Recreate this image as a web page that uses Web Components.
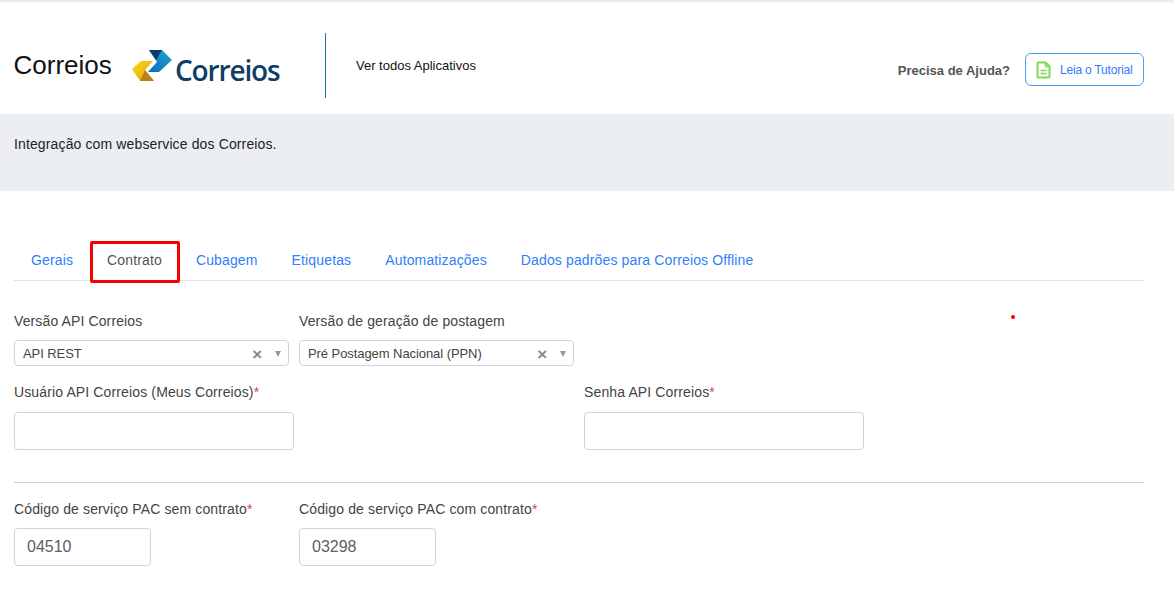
<!DOCTYPE html>
<html lang="pt-BR">
<head>
<meta charset="utf-8">
<title>Correios</title>
<style>
  html, body { margin: 0; background: #fff; font-family: "Liberation Sans", Arial, sans-serif; overflow: hidden; }
</style>
</head>
<body>
<app-header></app-header>
<info-banner>Integração com webservice dos Correios.</info-banner>
<tab-bar>
  <tab-item>Gerais</tab-item>
  <tab-item active>Contrato</tab-item>
  <tab-item>Cubagem</tab-item>
  <tab-item>Etiquetas</tab-item>
  <tab-item>Automatizações</tab-item>
  <tab-item>Dados padrões para Correios Offline</tab-item>
</tab-bar>
<contract-form></contract-form>

<script>
class AppHeader extends HTMLElement {
  constructor() {
    super();
    this.attachShadow({ mode: 'open' });
    this.shadowRoot.innerHTML = `
      <style>
        :host {
          display: flex;
          align-items: center;
          height: 114px;
          box-sizing: border-box;
          padding: 17px 30px 0 14px;
          background: linear-gradient(#e6e6e6, #f6f6f6 2px, #fff 4px);
          font-family: "Liberation Sans", Arial, sans-serif;
        }
        .title { font-size: 26px; color: #111; width: 118px; margin: -1px 0 0 -.5px; padding-right: .5px; }
        .logo { display: flex; align-items: flex-end; width: 193px; height: 36px; margin-top: 2px; }
        .logo svg { flex: none; display: block; margin-bottom: 4px; margin-left: -1px; margin-right: 1px; }
        .word {
          font-family: "Open Sans", sans-serif;
          font-size: 28px;
          font-weight: 600;
          letter-spacing: -1.15px;
          line-height: 30px;
          color: #0f3e68;
          margin-left: -1px;
        }
        .rule { width: 1px; height: 65px; background: #2a7398; }
        .all { font-size: 13px; color: #111; margin-left: 30px; }
        .spacer { flex: 1; }
        .help { font-size: 13px; font-weight: bold; color: #555; margin: 9px 15px 0 0; }
      </style>
      <div class="title">Correios</div>
      <div class="logo">
        <svg width="44" height="32" viewBox="0 0 44 32">
          <defs>
            <linearGradient id="y" x1="0" y1="0" x2="1" y2="1"><stop offset="0" stop-color="#f9d616"/><stop offset="1" stop-color="#e7a806"/></linearGradient>
            <linearGradient id="b" x1="0" y1="1" x2="1" y2="0"><stop offset="0" stop-color="#0b6fae"/><stop offset="1" stop-color="#1ea3dc"/></linearGradient>
          </defs>
          <path d="M18 1H31L41 11L28 23H17L26 13Z" fill="url(#b)"/>
          <path d="M18 1H31L25 11Z" fill="#0d3a66"/>
          <path d="M10 12H22L14 21L23 32H9L1 20Z" fill="url(#y)"/>
          <path d="M14 21L23 32H9Z" fill="#b9801c"/>
        </svg>
        <span class="word">Correios</span>
      </div>
      <div class="rule"></div>
      <div class="all">Ver todos Aplicativos</div>
      <div class="spacer"></div>
      <div class="help">Precisa de Ajuda?</div>
      <help-button>Leia o Tutorial</help-button>
    `;
  }
}

class HelpButton extends HTMLElement {
  constructor() {
    super();
    this.attachShadow({ mode: 'open' });
    this.shadowRoot.innerHTML = `
      <style>
        :host {
          display: flex;
          align-items: center;
          gap: 9px;
          width: 119px;
          height: 33px;
          box-sizing: border-box;
          padding-left: 10px;
          margin-top: 8px;
          border: 1px solid #4da0f7;
          border-radius: 6px;
          font-size: 12px;
          letter-spacing: -.2px;
          color: #2f7bf5;
        }
        svg { flex: none; display: block; }
      </style>
      <svg width="15" height="18" viewBox="0 0 15 18" fill="none" stroke="#7ddc4a" stroke-width="2" stroke-linejoin="round">
        <path d="M1.500 2.500a1 1 0 0 1 1-1H9.500L13.500 5.500V15.500a1 1 0 0 1-1 1H2.500a1 1 0 0 1-1-1Z"/>
        <path d="M9.500 1.500V5.500H13.500" stroke-width="1.500"/>
        <path d="M4.500 9.500H10.500M4.500 12.500H10.500" stroke-width="1.500"/>
      </svg>
      <slot></slot>
    `;
  }
}

class InfoBanner extends HTMLElement {
  constructor() {
    super();
    this.attachShadow({ mode: 'open' });
    this.shadowRoot.innerHTML = `
      <style>
        :host {
          display: block;
          height: 77px;
          box-sizing: border-box;
          padding: 22px 14px 0;
          background: #ebeff4;
          font-size: 14px;
          line-height: 16px;
          letter-spacing: .13px;
          color: #222;
        }
      </style>
      <slot></slot>
    `;
  }
}

class TabBar extends HTMLElement {
  constructor() {
    super();
    this.attachShadow({ mode: 'open' });
    this.shadowRoot.innerHTML = `
      <style>
        :host {
          display: flex;
          height: 41px;
          box-sizing: border-box;
          margin: 49px 30px 0 14px;
          padding-top: 1px;
          border-bottom: 1px solid #dee2e6;
        }
      </style>
      <slot></slot>
    `;
  }
}

class TabItem extends HTMLElement {
  constructor() {
    super();
    this.attachShadow({ mode: 'open' });
    this.shadowRoot.innerHTML = `
      <style>
        :host {
          display: block;
          position: relative;
          padding: 11px 17px 0;
          font-size: 14px;
          line-height: 16px;
          letter-spacing: .14px;
          color: #2f80fa;
        }
        :host([active]) { color: #555; }
        :host([active]) .mark {
          position: absolute;
          left: 0;
          top: 0;
          width: 90px;
          height: 42px;
          box-sizing: border-box;
          border: 3px solid #f60000;
          border-radius: 2px;
        }
      </style>
      <span class="mark"></span><slot></slot>
    `;
  }
}

class SelectField extends HTMLElement {
  constructor() {
    super();
    this.attachShadow({ mode: 'open' });
    this.shadowRoot.innerHTML = `
      <style>
        :host { display: block; width: 275px; }
        .label { font-size: 14px; line-height: 16px; letter-spacing: .12px; color: #444; margin-bottom: 11px; }
        .box {
          display: flex;
          align-items: center;
          height: 26px;
          box-sizing: border-box;
          padding: 0 7px 0 8px;
          border: 1px solid #cfd3da;
          border-radius: 4px;
          font-size: 13px;
          letter-spacing: -.07px;
          color: #444;
        }
        .value { flex: 1; }
        .clear { font-size: 17px; line-height: 15px; font-weight: bold; color: #888; margin: 3px 13px 0 0; }
        .arrow { width: 0; height: 0; border: 3.5px solid transparent; border-top: 6px solid #999; border-bottom: 0; margin-top: 1px; }
      </style>
      <div class="label"></div>
      <div class="box">
        <span class="value"></span>
        <span class="clear">×</span>
        <span class="arrow"></span>
      </div>
    `;
    this.shadowRoot.querySelector('.label').textContent = this.getAttribute('label');
    this.shadowRoot.querySelector('.value').textContent = this.getAttribute('value');
  }
}

class TextField extends HTMLElement {
  constructor() {
    super();
    this.attachShadow({ mode: 'open' });
    this.shadowRoot.innerHTML = `
      <style>
        :host { display: block; width: var(--field-width, 280px); }
        .label { font-size: 14px; line-height: 16px; letter-spacing: .13px; color: #444; margin-bottom: var(--label-gap, 12px); white-space: nowrap; }
        .label i { font-style: normal; color: #e23b4e; }
        .box {
          height: 38px;
          box-sizing: border-box;
          padding: 0 12px;
          border: 1px solid #cfd3da;
          border-radius: 4px;
          font-size: 16px;
          line-height: 36px;
          color: #5a5f66;
        }
      </style>
      <div class="label"><span></span><i>*</i></div>
      <div class="box"></div>
    `;
    this.shadowRoot.querySelector('.label span').textContent = this.getAttribute('label');
    this.shadowRoot.querySelector('.box').textContent = this.getAttribute('value') || '';
  }
}

class ContractForm extends HTMLElement {
  constructor() {
    super();
    this.attachShadow({ mode: 'open' });
    this.shadowRoot.innerHTML = `
      <style>
        :host {
          display: block;
          position: relative;
          margin: 32px 30px 0 14px;
        }
        .row { display: flex; }
        .row.selects { gap: 10px; }
        .row.creds { gap: 290px; margin-top: 18px; }
        .row.codes { gap: 148px; margin-top: 18px; --field-width: 137px; --label-gap: 11px; }
        hr { border: 0; border-top: 1px solid #ccc; margin: 32px 0 0; }
        .dot {
          position: absolute;
          left: 997px;
          top: 2px;
          width: 4px;
          height: 4px;
          border-radius: 50%;
          background: #f60000;
        }
      </style>
      <div class="row selects">
        <select-field label="Versão API Correios" value="API REST"></select-field>
        <select-field label="Versão de geração de postagem" value="Pré Postagem Nacional (PPN)"></select-field>
      </div>
      <div class="row creds">
        <text-field label="Usuário API Correios (Meus Correios)"></text-field>
        <text-field label="Senha API Correios"></text-field>
      </div>
      <hr>
      <div class="row codes">
        <text-field label="Código de serviço PAC sem contrato" value="04510"></text-field>
        <text-field label="Código de serviço PAC com contrato" value="03298"></text-field>
      </div>
      <span class="dot"></span>
    `;
  }
}

customElements.define('help-button', HelpButton);
customElements.define('app-header', AppHeader);
customElements.define('info-banner', InfoBanner);
customElements.define('tab-item', TabItem);
customElements.define('tab-bar', TabBar);
customElements.define('select-field', SelectField);
customElements.define('text-field', TextField);
customElements.define('contract-form', ContractForm);
</script>
</body>
</html>
